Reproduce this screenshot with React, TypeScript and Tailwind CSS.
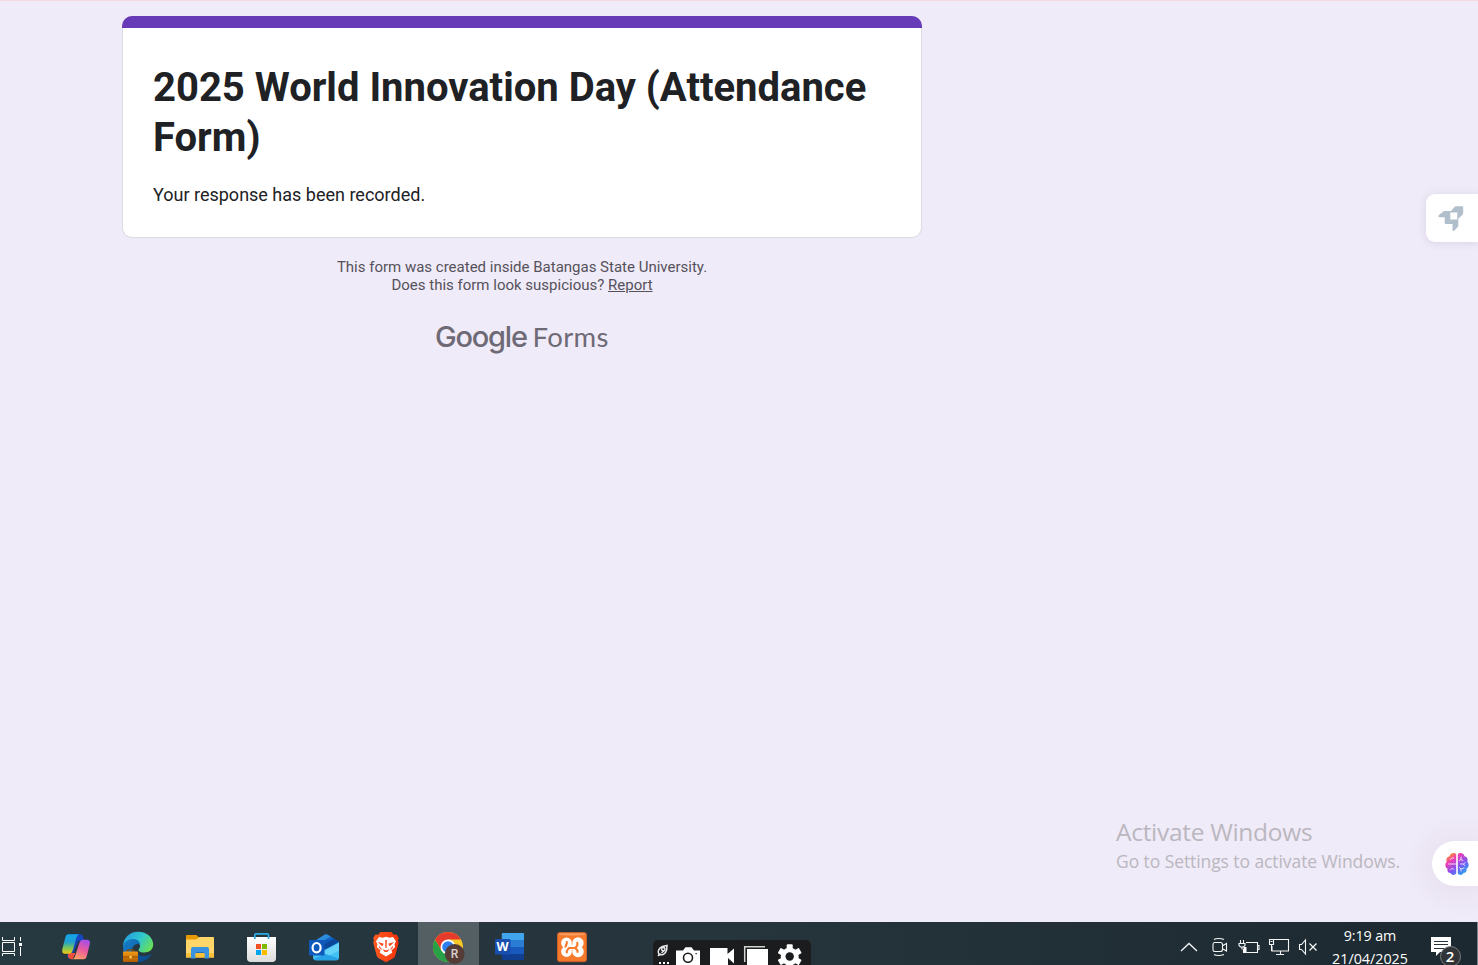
import type { ReactNode } from "react";

function TaskView() {
  return (
    <svg width="45" height="43" viewBox="0 0 45 43" fill="none" stroke="#fff" strokeWidth="1">
      <path d="M2.500 15v3.500h12V15M2.500 20.500h12v9h-12zM2.500 34v-2.500h12V34M20.500 15v4M20.500 25v9" />
      <path d="M19 21h3v3h-3z" fill="#fff" stroke="none" />
    </svg>
  );
}

function Copilot() {
  return (
    <svg width="62" height="43" viewBox="0 0 62 43">
      <defs>
        <linearGradient id="cpA" x1="0" y1="0" x2="0" y2="1">
          <stop offset="0" stopColor="#16a5ea" />
          <stop offset=".4" stopColor="#20a0cf" />
          <stop offset=".7" stopColor="#7cc85a" />
          <stop offset="1" stopColor="#f8c80e" />
        </linearGradient>
        <linearGradient id="cpB" x1=".7" y1="0" x2=".3" y2="1">
          <stop offset="0" stopColor="#a64ee8" />
          <stop offset=".5" stopColor="#ec5c9c" />
          <stop offset="1" stopColor="#ffa066" />
        </linearGradient>
      </defs>
      <path d="M24 12.300h11c2 0 2.800 1.500 3.300 3.200l1 3.500h-6l-5 12-3.500 6.300c-1.300-.6-1.900-2-2.400-3.300z" fill="#1647c0" />
      <path d="M23.500 31h7l-3 6.300c-2 0-4-.6-4.600-2.800z" fill="#ee4f3c" />
      <path d="M23.500 12.300h10.700c-2 .8-2.600 2.800-3.300 5L28 27.500c-.8 2.800-1.700 4.300-4.500 4.300H20c-2.400 0-3.300-2-2.700-4.500l2.800-11c.6-2.500 1.400-4 3.400-4z" fill="url(#cpA)" />
      <path d="M38.500 37.300H27.300c2-.8 2.700-2.500 3.300-4.700L34 22c.8-2.500 1.800-4.200 4.300-4.200H42c2.600 0 3.400 1.800 2.800 4.300l-2.700 10.800c-.6 2.600-1.500 4.400-3.600 4.400z" fill="url(#cpB)" />
    </svg>
  );
}

function Edge() {
  return (
    <svg width="62" height="43" viewBox="0 0 62 43">
      <defs>
        <linearGradient id="edA" x1="0" y1=".2" x2="1" y2=".7">
          <stop offset="0" stopColor="#239bdf" />
          <stop offset=".5" stopColor="#2fc6cf" />
          <stop offset="1" stopColor="#6be052" />
        </linearGradient>
        <linearGradient id="edB" x1="0" y1="0" x2="1" y2="1">
          <stop offset="0" stopColor="#1780c8" />
          <stop offset="1" stopColor="#0b5aa4" />
        </linearGradient>
        <linearGradient id="edC" x1="0" y1="0" x2="0" y2="1">
          <stop offset="0" stopColor="#f39c16" />
          <stop offset="1" stopColor="#b05a00" />
        </linearGradient>
      </defs>
      <path d="M16 25c0-9 6.500-15.200 15-15.200 9 0 15.200 6 15.200 12.800 0 5-4 8-8.700 8-4 0-6-1.400-6-2.700 0-1 1.500-1.700 1.500-4 0-3-3-5.400-7-5.400-5 0-9 3-10 6.500z" fill="url(#edA)" />
      <path d="M16 25c.5-4.800 5.200-8 10-8 4.200 0 7 2.400 7 5.500-4-2-8 1.300-8 6 0 5.500 4.200 9 9.500 9.200C24 43 16 35 16 25z" fill="url(#edB)" />
      <path d="M28 28c1 5 7.500 7.200 12.500 5.500 1.500-.5 3-1.800 4-1.200C41.500 37.500 36.500 40.300 31 40c-3-2-5.500-8-3-12z" fill="#0d4f91" />
      <path d="M20 30v-1c0-.8.500-1.200 1.200-1.200h4.500c.8 0 1.300.5 1.300 1.200v1" fill="none" stroke="#8c4a05" strokeWidth="1.200" />
      <rect x="16" y="29.500" width="15" height="10.500" rx=".8" fill="url(#edC)" />
      <path d="M16 35h15" stroke="#8b4600" strokeWidth=".8" />
      <rect x="22.500" y="33.800" width="2.200" height="2.600" fill="#ffd24a" />
    </svg>
  );
}

function Folder() {
  return (
    <svg width="62" height="43" viewBox="0 0 62 43">
      <path d="M17 14c0-.6.400-1 1-1h9.500l3 3-2.500 3H17z" fill="#e49a05" />
      <path d="M17 17.500h10l3.500-2.500H44c.7 0 1 .4 1 1v19.500H17z" fill="#ffd667" />
      <path d="M17 31h28v4.500H17z" fill="#f6c23b" />
      <path d="M22 36.500V27c0-1.200.8-2 2-2h14c1.200 0 2 .8 2 2v9.500h-4.300v-4.700c0-.5-.3-.8-.8-.8h-7.800c-.5 0-.8.300-.8.800v4.700z" fill="#3a93de" />
      <path d="M27.100 30.500h7.800" stroke="#1e72b9" />
    </svg>
  );
}

function Store() {
  return (
    <svg width="62" height="43" viewBox="0 0 62 43">
      <defs>
        <linearGradient id="stA" x1="0" y1="0" x2="0" y2="1">
          <stop offset="0" stopColor="#fff" />
          <stop offset="1" stopColor="#dcdcdc" />
        </linearGradient>
      </defs>
      <path d="M16 15h29v21.500c0 2-1.500 3.500-3.500 3.500h-22c-2 0-3.500-1.500-3.500-3.500z" fill="url(#stA)" />
      <path d="M23.800 17v-4c0-.7.500-1.200 1.200-1.200h11.300c.7 0 1.200.5 1.200 1.200v4" fill="none" stroke="#2daae4" strokeWidth="1.700" />
      <path d="M25 22h5v5h-5z" fill="#f25022" />
      <path d="M31 22h5v5h-5z" fill="#7fba00" />
      <path d="M25 28h5v5h-5z" fill="#00a4ef" />
      <path d="M31 28h5v5h-5z" fill="#ffb900" />
    </svg>
  );
}

function Outlook() {
  return (
    <svg width="62" height="43" viewBox="0 0 62 43">
      <path d="M20 20l11.500-7.300c1-.7 2.100-.7 3.100 0L46 19.800V30H20z" fill="#1668c8" />
      <path d="M20 21.500L40.500 16.300 44.500 19 30 29z" fill="#0e57b5" />
      <path d="M29 23.500l12.500-6.500 4.500 2.800-14 8.500z" fill="#0b479a" />
      <path d="M21 19.500l10.500-6.800c1-.7 2.100-.7 3.100 0l3 1.900L26 21z" fill="#2d8ddd" />
      <path d="M20 35.500V30l11-2 15-7.500v15c0 1.600-1.200 2.800-2.800 2.800H23c-1.700 0-3-1.200-3-2.800z" fill="#43bff1" />
      <path d="M31 29.500l15-9v8L33 35z" fill="#65d3fa" />
      <path d="M20.500 37l12-5 13 4.500c-.4 1.100-1.300 1.800-2.500 1.800H23c-1 0-2-.5-2.500-1.300z" fill="#28a2e6" />
      <rect x="16" y="18" width="15.500" height="15.500" rx="1.200" fill="#0e59bb" />
      <ellipse cx="23.600" cy="25.700" rx="4" ry="4.700" fill="none" stroke="#fff" strokeWidth="2.200" />
    </svg>
  );
}

function Brave() {
  return (
    <svg width="62" height="43" viewBox="0 0 62 43">
      <defs>
        <linearGradient id="brA" x1="0" y1="0" x2="1" y2="0">
          <stop offset="0" stopColor="#ff5a1f" />
          <stop offset="1" stopColor="#f5340b" />
        </linearGradient>
      </defs>
      <path d="M25.500 10h10.800l2.400 2.700 2.700-.2 2.300 3.500-.8 2.300.8 2.500-3.400 12.500c-.5 1.800-1 2.300-2.500 3.300L31 40.200l-6.800-3.600c-1.500-1-2.200-1.700-2.600-3.300L18.200 20.800l.8-2.500-.8-2.300 2.300-3.500 2.700.2z" fill="url(#brA)" />
      <path d="M24 15l3.500.7 3.500-1 3.500 1L38 15l3 4.200-1.500 3.400.7 2.400-3.600 3.200.6 2.500L31 34.500l-6.200-3.800.6-2.500-3.600-3.200.7-2.400-1.500-3.400z" fill="#fff" />
      <path d="M22.800 20l6 1.800-1.600 2.400zM39.200 20l-6 1.800 1.600 2.400zM30.200 18h1.600l-.2 8h-1.200zM27.300 27l3.700 1.400 3.700-1.400-2.500 3h-2.400z" fill="#fb4617" />
      <path d="M24 24.500l2.500 3M38 24.500l-2.500 3" stroke="#fb4617" strokeWidth="1.100" />
    </svg>
  );
}

function Chrome() {
  return (
    <svg width="62" height="43" viewBox="0 0 62 43">
      <circle cx="31" cy="25" r="15" fill="#f8c927" />
      <path d="M18 17.500A15 15 0 0 1 44 17.500H31L24.500 28.700z" fill="#e53b2d" />
      <path d="M18 17.500a15 15 0 0 0 13 22.500l6.500-11.300-13 0z" fill="#26a148" />
      <circle cx="31" cy="25" r="7.500" fill="#fff" />
      <circle cx="31" cy="25" r="5.800" fill="#2d7ff0" />
      <circle cx="37.700" cy="32" r="9.900" fill="#553c36" />
      <text x="37.600" y="36.200" textAnchor="middle" fontFamily="Roboto, sans-serif" fontSize="12" fontWeight="500" fill="#ddd4d0">R</text>
    </svg>
  );
}

function Word() {
  return (
    <svg width="62" height="43" viewBox="0 0 62 43">
      <path d="M22.800 12c0-.6.400-1 1-1H44c.6 0 1 .4 1 1v6H22.800z" fill="#41a5ee" />
      <path d="M22.800 18H45v7H22.800z" fill="#2b7cd3" />
      <path d="M22.800 25H45v7H22.800z" fill="#185abd" />
      <path d="M22.800 32H45v5c0 .6-.4 1-1 1H23.800c-.6 0-1-.4-1-1z" fill="#103f91" />
      <rect x="16" y="17" width="15.500" height="15.500" rx="1.200" fill="#184fae" />
      <text x="23.600" y="29.300" textAnchor="middle" fontFamily="Open Sans, sans-serif" fontSize="12.500" fontWeight="700" fill="#fff">W</text>
    </svg>
  );
}

function Xampp() {
  return (
    <svg width="62" height="43" viewBox="0 0 62 43">
      <rect x="16.500" y="10.500" width="29" height="29.200" rx="2.500" fill="#f7792b" stroke="#c9622a" />
      <path d="M18 11.500h26v1c-7 1.200-19 1.200-26 0z" fill="#fba26a" />
      <g fill="#fff">
        <circle cx="25.500" cy="21" r="5.400" />
        <circle cx="37" cy="21" r="5.700" />
        <circle cx="25.500" cy="29.500" r="5.400" />
        <circle cx="37" cy="29.500" r="5.700" />
        <path d="M24 22.500h14v5.500H24z" />
      </g>
      <g fill="none" stroke="#f7792b" strokeWidth="2.100" strokeLinecap="round" strokeLinejoin="round">
        <path d="M25.800 20v1.500l-1.300 3.200M25.800 30.500v-1.500l2-3h6.500l2-2.500v-2.800M34.300 26l2.200 2.500v1.500" />
      </g>
    </svg>
  );
}

function TaskButton({ children, active = false }: { children: ReactNode; active?: boolean }) {
  return (
    <button className={active ? "h-[43px] w-[62px] shrink-0 border-l border-[#27363c] bg-[#535f62]" : "h-[43px] w-[62px] shrink-0"}>
      <span className={active ? "-ml-px block w-[62px]" : "block w-[62px]"}>{children}</span>
    </button>
  );
}

function Recorder() {
  return (
    <div className="h-[25px] w-[158px] overflow-hidden rounded-t-[5px] bg-[#1b1c1d]">
      <svg width="158" height="25" viewBox="0 0 158 25">
        <g fill="none" stroke="#e8e8e8" strokeWidth="1.500">
          <path d="M6 14.500c-2-3 0-6.500 3.500-8L14 5.500l-.3 4.200C12.700 13.700 9.500 15.700 6 14.500z" />
          <path d="M5 16l2.500-2.500M8.500 13l3-3" />
          <circle cx="10.300" cy="9.300" r="1.700" />
        </g>
        <path d="M6 22h2v2H6zM10 22h2v2h-2zM14 22h2v2h-2z" fill="#fff" />
        <path d="M23 10.500h7l2.500-3.300h6L41 10.500h6V25H23z" fill="#fff" />
        <circle cx="35" cy="17.800" r="4.500" fill="#fff" stroke="#1b1c1d" strokeWidth="1.600" />
        <path d="M42.500 13h1.300v1.300h-1.300z" fill="#1b1c1d" />
        <path d="M57 8h17.500v6L81 8.500v15L75 18v7H57z" fill="#fff" />
        <path d="M91.700 22V6.700H112" fill="none" stroke="#d2d2d2" strokeWidth="1.500" />
        <path d="M94 9h21v16H94z" fill="#fff" />
        <g fill="#fff">
          <circle cx="136.700" cy="16.500" r="9" />
          <rect x="133.700" y="4.300" width="6" height="24.400" rx="1" />
          <rect x="133.700" y="4.300" width="6" height="24.400" rx="1" transform="rotate(60 136.700 16.500)" />
          <rect x="133.700" y="4.300" width="6" height="24.400" rx="1" transform="rotate(120 136.700 16.500)" />
        </g>
        <circle cx="136.700" cy="16.500" r="4.200" fill="#1b1c1d" />
      </svg>
    </div>
  );
}

function TrayIcons() {
  return (
    <svg width="152" height="43" viewBox="1176 922 152 43" fill="none" stroke="#f4f6f6" strokeWidth="1.100">
      <path d="M1181 951l8-7.500 8 7.500" strokeWidth="1.300" />
      <path d="M1214.500 942.500h6c1.200 0 2 .8 2 2v5c0 1.200-.8 2-2 2h-6c-1 0-1.500-.8-1.500-2v-5c0-1.200.5-2 1.500-2zM1223 945.500l3.500-2v7.500l-3.500-2M1214 939.500c2-1.300 7-1.300 10 0M1214 954.500c2 1.300 7 1.300 10 0" />
      <path d="M1246 942.500h11.500v10h-14V949M1257.500 945.500h1.500v4h-1.500M1240.500 940v3M1243.500 940v3M1239 943.500h6v2l-1.500 1.500h-3l-1.500-1.500zM1242 947v2.500" />
      <path d="M1243.500 947h3v5h-3z" fill="#fff" stroke="none" />
      <path d="M1274 939.500h14.500v11.500h-16.500v-5M1280.500 951v3M1276 954.500h8M1269.500 939.500h4v5h-4zM1271.500 944.500v6.500M1270.500 941.500h2" />
      <path d="M1299.500 944.500h2l4-4.500v14l-4-4.500h-2z" />
      <path d="M1309.500 943.500l7 7M1316.500 943.500l-7 7" strokeWidth="1.300" />
    </svg>
  );
}

function Notifications() {
  return (
    <svg width="64" height="43" viewBox="1413 922 64 43">
      <path d="M1431 937h20v15h-11l-4 4v-4h-5z" fill="#fff" />
      <path d="M1434 941.500h14M1434 944.500h14M1434 948.500h10" stroke="#25323a" strokeWidth="1.200" />
      <circle cx="1450.500" cy="956.500" r="10" fill="#303436" stroke="#777d80" strokeWidth="1" />
      <text x="1450" y="962" textAnchor="middle" fontFamily="Open Sans, sans-serif" fontSize="15" fontWeight="600" fill="#fff">2</text>
    </svg>
  );
}

function Taskbar() {
  return (
    <footer className="flex h-[43px] shrink-0 bg-gradient-to-r from-[#263840] via-[#26343c] to-[#1c2930]">
      <div className="w-[45px]"><TaskView /></div>
      <TaskButton><Copilot /></TaskButton>
      <TaskButton><Edge /></TaskButton>
      <TaskButton><Folder /></TaskButton>
      <TaskButton><Store /></TaskButton>
      <TaskButton><Outlook /></TaskButton>
      <TaskButton><Brave /></TaskButton>
      <TaskButton active><Chrome /></TaskButton>
      <TaskButton><Word /></TaskButton>
      <TaskButton><Xampp /></TaskButton>
      <div className="ml-[50px] self-end"><Recorder /></div>
      <div className="ml-auto flex">
        <TrayIcons />
        <div className="w-[85px] whitespace-nowrap pr-px pt-[3px] text-center font-['Open_Sans',sans-serif] text-[14.3px] leading-[22px] text-white">
          <div className="tracking-[-0.1px]">9:19 am</div>
          <div className="mt-px">21/04/2025</div>
        </div>
        <Notifications />
        <div className="w-px bg-[#78848a]" />
      </div>
    </footer>
  );
}

function FormCard() {
  return (
    <section className="h-[222px] w-[800px] overflow-hidden rounded-[10px] bg-[#dadce0]">
      <div className="h-3 bg-[#673ab7]" />
      <div className="mx-px h-[209px] rounded-b-[9px] bg-white px-[30px] pt-[35px]">
        <h1 className="text-[40px] font-bold leading-[50px] text-[#202124]">
          2025 World Innovation Day (Attendance<br />Form)
        </h1>
        <p className="mt-[19px] text-[18px] leading-[25px] text-[#202124]">Your response has been recorded.</p>
      </div>
    </section>
  );
}

function GoogleFormsLogo() {
  return (
    <svg width="180" height="40" viewBox="432 318 180 40" fill="#6e6a75" className="mt-[24px]">
      <text x="435" y="346.500" fontFamily="Inter, sans-serif" fontSize="29" fontWeight="500" textLength="93" lengthAdjust="spacing">Google</text>
      <text x="532.500" y="347" fontFamily="Lato, sans-serif" fontSize="27.500" fontWeight="400" textLength="76" lengthAdjust="spacing">Forms</text>
    </svg>
  );
}

function RocketTab() {
  return (
    <div className="flex h-[48px] w-[52px] items-center rounded-l-[9px] bg-white pl-[12px] pt-px shadow-[0_1px_8px_rgba(80,65,120,0.14)]">
      <svg width="26" height="26" viewBox="0 0 26 26" fill="#b1bfcd">
        <path d="M6 5h7l3.500-4c.5-.5 1-.8 1.700-.8H24c.8 0 1.200.5 1.200 1.200V7c0 .7-.2 1.200-.7 1.700l-4.200 4v7.500l-4 4.500c-.8.700-1.800.3-1.800-.7V18H8c-.8 0-1.300-.5-1.300-1.300v-5.400H1.500C.3 11.300 0 10 .7 9.300z" />
        <path d="M12.300 6.500h7v7h-7z" fill="#fff" />
      </svg>
    </div>
  );
}

function BrainTab() {
  return (
    <div className="flex h-[45px] w-[46px] items-center rounded-l-full bg-white pl-[13px] shadow-[0_2px_28px_6px_rgba(80,60,110,0.07)]">
      <svg width="24" height="24" viewBox="0 0 24 24">
        <defs>
          <linearGradient id="brain" x1=".1" y1="0" x2=".9" y2="1">
            <stop offset="0" stopColor="#ffb000" />
            <stop offset=".28" stopColor="#ef3cb5" />
            <stop offset=".6" stopColor="#8054f2" />
            <stop offset="1" stopColor="#16b7f5" />
          </linearGradient>
        </defs>
        <path d="M11.200 2.500v18.800c-1 2.300-4.800 2.100-5.700-.3-2.400 0-3.600-2.200-2.900-4.200C0 15.500-.5 11.700 1.700 10 .7 7.200 2 4.800 4.500 4.300 5.200.8 10 .1 11.200 2.500zM12.800 2.500v18.800c1 2.300 4.800 2.100 5.700-.3 2.400 0 3.600-2.200 2.900-4.200 2.600-1.300 3.100-5.100.9-6.800 1-2.800-.3-5.200-2.800-5.700-.7-3.500-5.500-4.200-6.700-1.800z" fill="url(#brain)" />
        <path d="M3.500 12h8M5.500 7.500c.8-1.500 2-2 3.200-1.500M5.500 17.500c1-1.200 2.500-1.200 3.500-.2M16 5v2.500l-1.500 1M16 7.500l2 1M15.500 12h3l1.800-1.500M18.500 12l1 1.500M16 19v-2l-1.500-1.500M16 17l3-1" fill="none" stroke="#fff" strokeOpacity=".75" strokeWidth="1" strokeLinecap="round" />
      </svg>
    </div>
  );
}

export default function App() {
  return (
    <div className="flex h-[965px] w-[1478px] flex-col overflow-hidden bg-[#f0ebf8] font-[Roboto,sans-serif]">
      <div className="relative flex h-[922px] shrink-0 border-t border-[#f6d9e2]">
        <main className="ml-[122px] flex w-[800px] flex-col items-center pt-[15px]">
          <FormCard />
          <div className="mt-5 text-center text-[15px] leading-[18px] text-[#55525b]">
            <p>This form was created inside Batangas State University.</p>
            <p>Does this form look suspicious? <a className="underline">Report</a></p>
          </div>
          <GoogleFormsLogo />
        </main>
        <div className="absolute right-0 top-[193px]"><RocketTab /></div>
        <div className="absolute right-0 top-[840px]"><BrainTab /></div>
        <div className="absolute left-[1116px] top-[815px] whitespace-nowrap font-['Open_Sans',sans-serif] text-[#bab7bf]">
          <div className="text-[24.500px] leading-8 tracking-[-0.3px]">Activate Windows</div>
          <div className="text-[17.500px] leading-[26px] tracking-[-0.08px]">Go to Settings to activate Windows.</div>
        </div>
      </div>
      <Taskbar />
    </div>
  );
}
